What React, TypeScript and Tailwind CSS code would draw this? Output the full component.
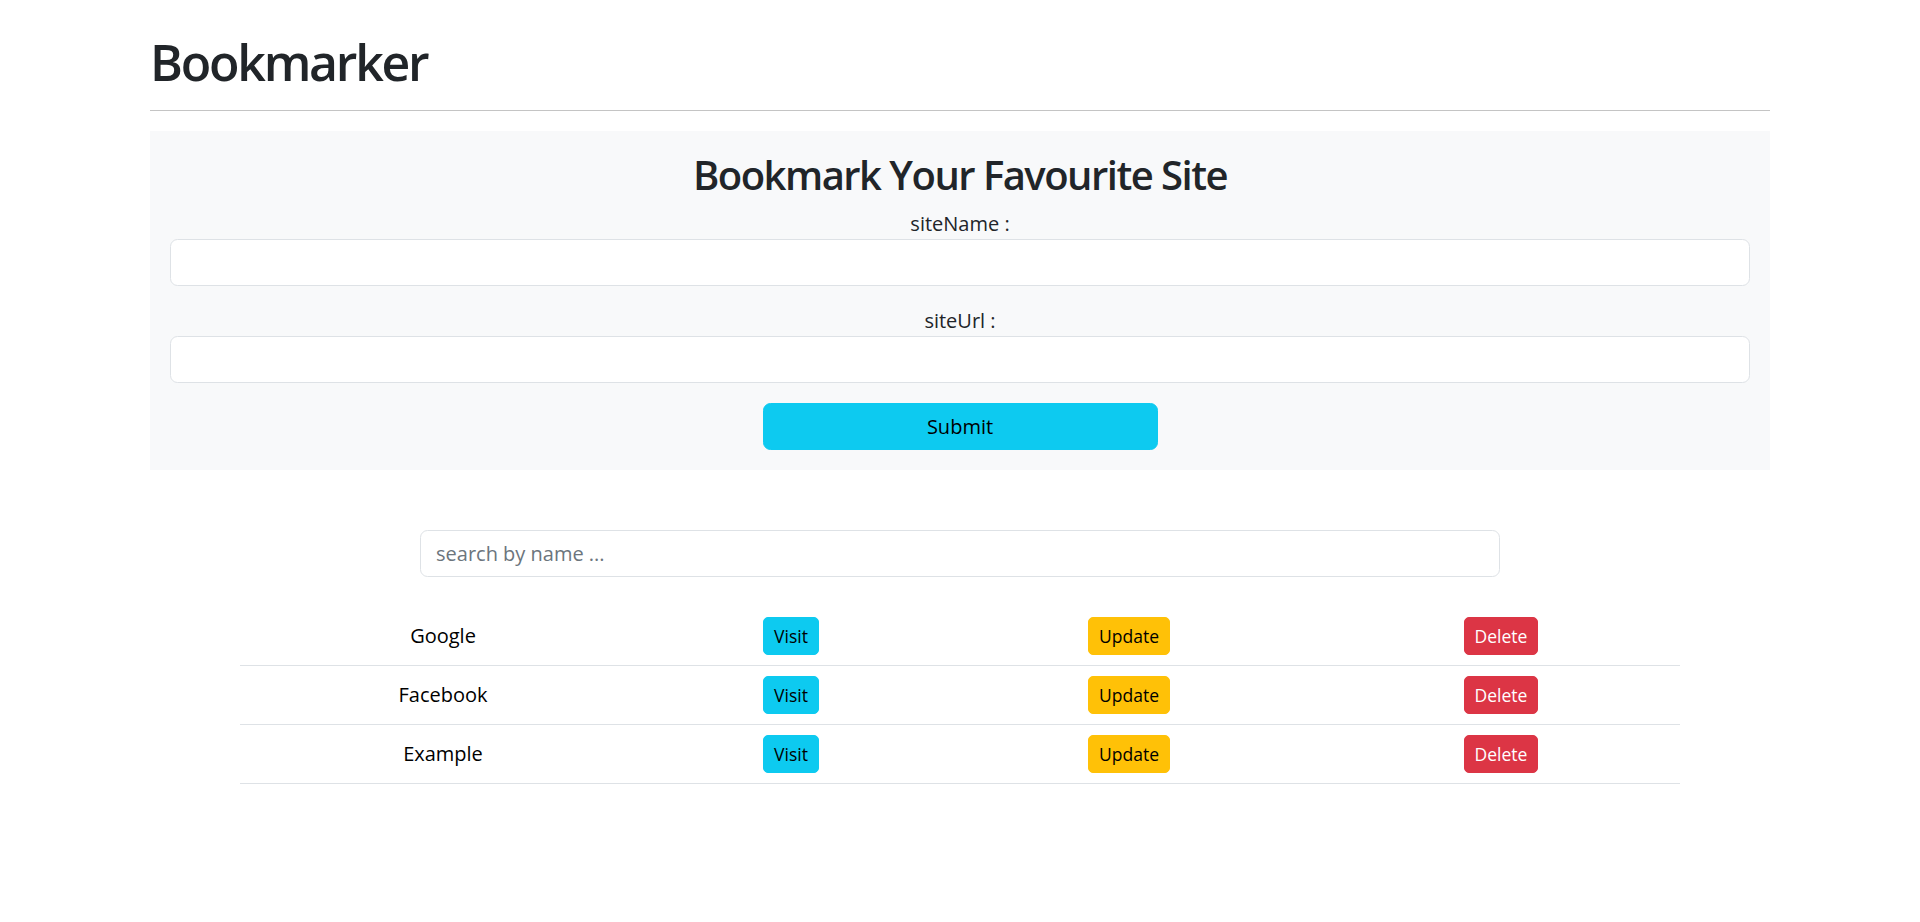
import { useState } from "react";

type Bookmark = { name: string; url: string };

const INITIAL: Bookmark[] = [
  { name: "Google", url: "https://www.google.com" },
  { name: "Facebook", url: "https://www.facebook.com" },
  { name: "Example", url: "https://www.example.com" },
];

const inputClass =
  "block w-full h-[47px] px-[15px] bg-white border border-[#dee2e6] rounded-[7.5px] text-[20px] text-[#212529] outline-none placeholder:text-[#6c757d]";

export default function App() {
  const [siteName, setSiteName] = useState("");
  const [siteUrl, setSiteUrl] = useState("");
  const [search, setSearch] = useState("");
  const [bookmarks] = useState<Bookmark[]>(INITIAL);

  const shown = bookmarks.filter((b) =>
    b.name.toLowerCase().includes(search.toLowerCase())
  );

  return (
    <div className="min-h-screen bg-white text-[#212529] font-['Open_Sans','Noto_Sans',sans-serif]">
      <div className="w-[1620px] mx-auto pt-[32px]">
        <h1 className="text-[50px] leading-[60px] font-semibold tracking-[-0.045em]">Bookmarker</h1>
        <hr className="mt-[18px] mb-[20px] border-0 border-t border-[#c4c4c4]" />

        <div className="bg-[#f8f9fa] p-[20px] text-center">
          <h2 className="text-[40px] leading-[48px] font-semibold tracking-[-0.038em] mb-[10px]">
            Bookmark Your Favourite Site
          </h2>
          <label className="block text-[20px] leading-[30px]">siteName :</label>
          <input
            className={inputClass}
            value={siteName}
            onChange={(e) => setSiteName(e.target.value)}
          />
          <label className="block text-[20px] leading-[30px] mt-[20px]">siteUrl :</label>
          <input
            className={inputClass}
            value={siteUrl}
            onChange={(e) => setSiteUrl(e.target.value)}
          />
          <button className="mt-[20px] w-1/4 h-[47px] bg-[#0dcaf0] text-black text-[20px] leading-[30px] rounded-[7.5px] border border-[#0dcaf0]">
            Submit
          </button>
        </div>

        <div className="w-[1080px] mx-auto mt-[60px]">
          <input
            className={inputClass}
            placeholder="search by name ..."
            value={search}
            onChange={(e) => setSearch(e.target.value)}
          />
        </div>
      </div>

      <table className="w-[1440px] mx-auto mt-[30px] text-center table-fixed">
        <colgroup>
          <col className="w-[406px]" />
          <col className="w-[290px]" />
          <col className="w-[386px]" />
          <col className="w-[358px]" />
        </colgroup>
        <tbody>
          {shown.map((b) => (
            <tr key={b.name} className="border-b border-[#dee2e6]">
              <td className="p-[10px] text-[20px] leading-[30px] text-black align-middle">
                {b.name}
              </td>
              <td className="p-[10px] align-middle">
                <button className="px-[10px] py-[5px] text-[17.5px] leading-[26px] bg-[#0dcaf0] border border-[#0dcaf0] text-black rounded-[5px]">
                  Visit
                </button>
              </td>
              <td className="p-[10px] align-middle">
                <button className="px-[10px] py-[5px] text-[17.5px] leading-[26px] bg-[#ffc107] border border-[#ffc107] text-black rounded-[5px]">
                  Update
                </button>
              </td>
              <td className="p-[10px] align-middle">
                <button className="px-[10px] py-[5px] text-[17.5px] leading-[26px] bg-[#dc3545] border border-[#dc3545] text-white rounded-[5px]">
                  Delete
                </button>
              </td>
            </tr>
          ))}
        </tbody>
      </table>
    </div>
  );
}
